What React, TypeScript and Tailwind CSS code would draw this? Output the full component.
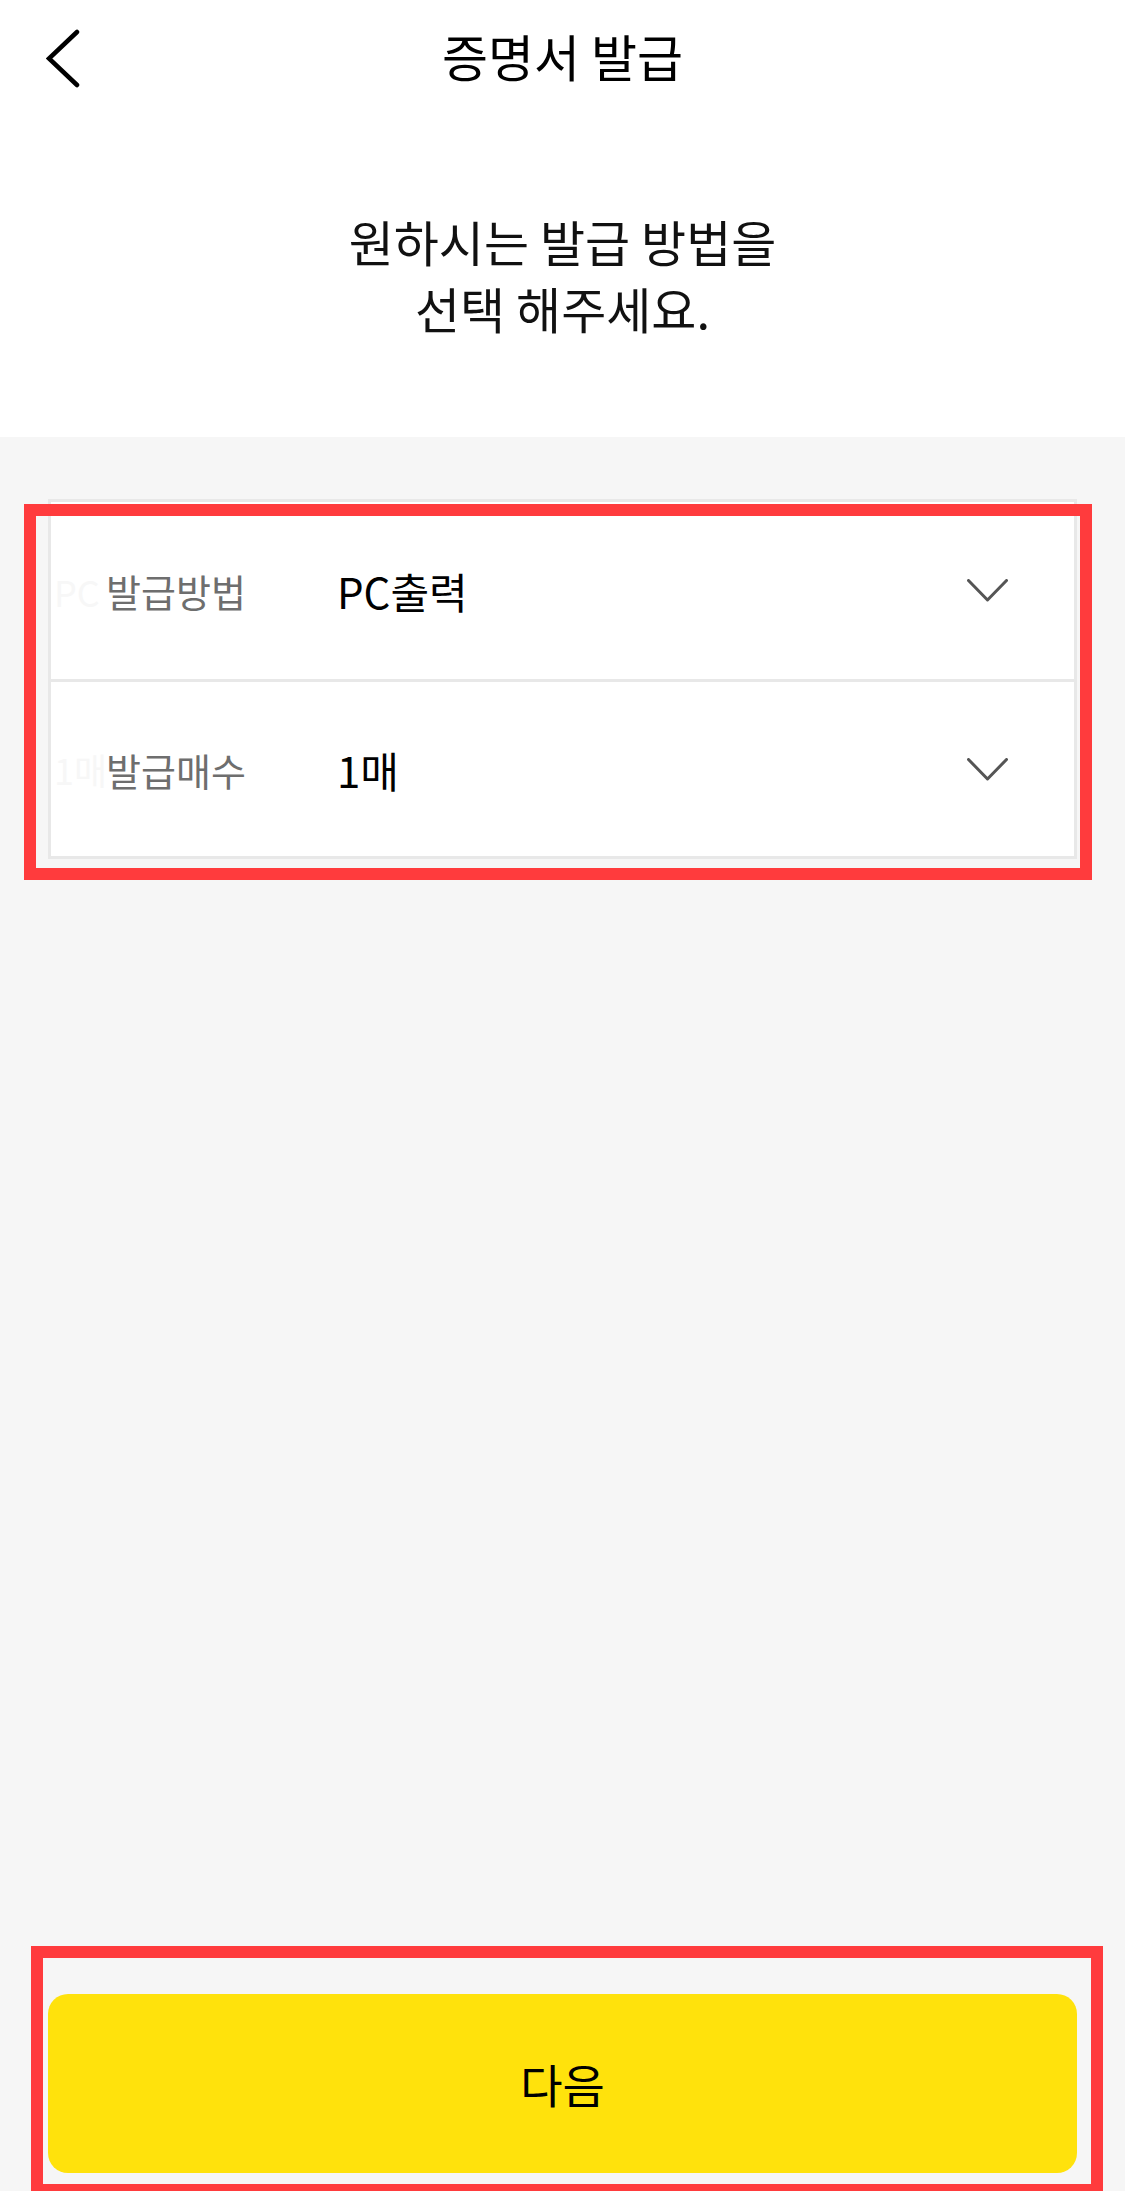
// Certificate issue step: choose how to issue (method + copies), then "다음".
// Red rectangles are review annotations laid over the screen.

const FONT = "font-['Noto_Sans_CJK_KR','Noto_Sans',sans-serif]";

const ROWS = [
  { label: "발급방법", value: "PC출력", ghost: "PC" },
  { label: "발급매수", value: "1매", ghost: "1매" },
];

function Chevron() {
  return (
    <svg width="41" height="23" viewBox="0 0 41 23" fill="none" className="shrink-0">
      <polyline
        points="1.5,1.5 20.5,21 39.5,1.5"
        stroke="#555555"
        strokeWidth="3"
        strokeLinecap="round"
        strokeLinejoin="round"
      />
    </svg>
  );
}

export default function App() {
  return (
    <div className={`relative flex h-[2191px] w-full flex-col bg-[#f6f6f6] ${FONT}`}>
      <header className="bg-white pb-[96px]">
        <div className="relative flex h-[117px] items-center justify-center">
          <button type="button" className="absolute left-[46px] top-[29px]" aria-label="뒤로">
            <svg width="34" height="59" viewBox="0 0 34 59" fill="none">
              <polyline points="31,3 3,29.5 31,56" stroke="#000" strokeWidth="4.5" strokeLinecap="round" />
            </svg>
          </button>
          <h1 className="-mt-[7px] text-[50px] font-normal leading-none text-black">증명서 발급</h1>
        </div>
        <p className="mt-[90px] text-center text-[49px] leading-[67px] text-[#111]">
          원하시는 발급 방법을
          <br />
          선택 해주세요.
        </p>
      </header>

      <main className="flex flex-1 flex-col px-[48px] pb-[18px] pt-[62px]">
        <div className="border-[3px] border-[#e8e8e8] bg-white">
          {ROWS.map((row, i) => (
            <div
              key={row.label}
              className={`relative flex h-[177px] items-center pl-[55px] pr-[66px] ${
                i > 0 ? "border-t-[3px] border-[#e8e8e8]" : ""
              }`}
            >
              <span className="absolute left-[3px] top-1/2 -translate-y-1/2 text-[36px] text-[#f7f7f7]">
                {row.ghost}
              </span>
              <span className="relative w-[231px] shrink-0 text-[38px] text-[#6e6e6e]">{row.label}</span>
              <span className="flex-1 text-[42px] text-black">{row.value}</span>
              <Chevron />
            </div>
          ))}
        </div>

        <div className="flex-1" />

        <button
          type="button"
          className="flex h-[179px] w-full items-center justify-center rounded-[20px] bg-[#ffe20c] text-[46px] text-black"
        >
          다음
        </button>
      </main>

      {/* review annotations */}
      <div className="pointer-events-none absolute left-[24px] top-[504px] h-[376px] w-[1068px] border-[12px] border-[#ff3b3d]" />
      <div className="pointer-events-none absolute left-[31px] top-[1946px] h-[250px] w-[1072px] border-[12px] border-[#ff3b3d]" />
    </div>
  );
}
